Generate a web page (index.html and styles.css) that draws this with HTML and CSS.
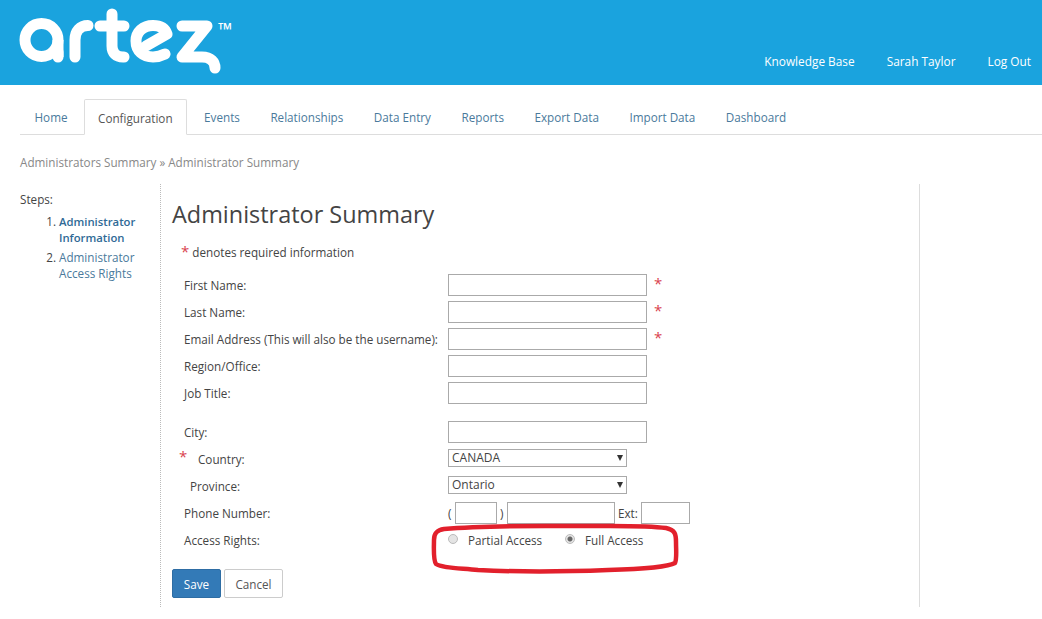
FILE: index.html
```html
<!DOCTYPE html>
<html lang="en">
<head>
<meta charset="utf-8">
<title>Administrator Summary</title>
<link rel="stylesheet" href="styles.css">
</head>
<body>
<header class="header">
  <a class="logo" aria-label="artez">
    <svg width="235" height="85" viewBox="0 0 235 85" fill="none" stroke="#fff" stroke-width="11" stroke-linecap="round" stroke-linejoin="round">
      <circle cx="41.500" cy="40" r="16.500"/>
      <path d="M58 40V57" stroke-linecap="butt"/>
      <path d="M58 52V57"/>
      <path d="M75 57V40C75 31 80 25.500 88 25.500"/>
      <path d="M112 14V46C112 53 116 57 123 57H124M100 26H124"/>
      <path d="M146 46L167 34C165 28 160 25.500 153 25.500C143 25.500 136 32 136 41C136 51 143 57 153 57C158 57 161 56 165 54"/>
      <path d="M182 26H207L182 57H202C211 57 215 62 215 68"/>
      <text class="tm" x="218" y="35.500" stroke="none" fill="#fff">™</text>
    </svg>
  </a>
  <nav class="user-nav">
    <a>Knowledge Base</a>
    <a>Sarah Taylor</a>
    <a>Log Out</a>
  </nav>
</header>

<nav class="tabs">
  <a class="tab">Home</a>
  <a class="tab active">Configuration</a>
  <a class="tab">Events</a>
  <a class="tab">Relationships</a>
  <a class="tab">Data Entry</a>
  <a class="tab">Reports</a>
  <a class="tab">Export Data</a>
  <a class="tab">Import Data</a>
  <a class="tab">Dashboard</a>
</nav>

<div class="breadcrumb">Administrators Summary » Administrator Summary</div>

<div class="page">
  <aside class="steps">
    <div class="steps-title">Steps:</div>
    <ol class="steps-list">
      <li><a class="current">Administrator Information</a></li>
      <li><a>Administrator Access Rights</a></li>
    </ol>
  </aside>

  <main class="content">
    <h1 class="title">Administrator Summary</h1>
    <p class="required-note"><span class="star">*</span> denotes required information</p>

    <form class="form">
      <div class="row"><label class="label">First Name:</label><input class="input" type="text"><span class="star side">*</span></div>
      <div class="row"><label class="label">Last Name:</label><input class="input" type="text"><span class="star side">*</span></div>
      <div class="row"><label class="label">Email Address (This will also be the username):</label><input class="input" type="text"><span class="star side">*</span></div>
      <div class="row"><label class="label">Region/Office:</label><input class="input" type="text"></div>
      <div class="row"><label class="label">Job Title:</label><input class="input" type="text"></div>
      <div class="row city"><label class="label">City:</label><input class="input" type="text"></div>
      <div class="row"><label class="label country"><span class="star lead">*</span>Country:</label><div class="select">CANADA<span class="caret"></span></div></div>
      <div class="row"><label class="label province">Province:</label><div class="select">Ontario<span class="caret"></span></div></div>
      <div class="row"><label class="label">Phone Number:</label>
        <div class="phone">
          <span class="paren">(</span><input class="input area" type="text"><span class="paren">)</span><input class="input number" type="text"><span class="ext-label">Ext:</span><input class="input ext" type="text">
        </div>
      </div>
      <div class="row"><label class="label">Access Rights:</label>
        <div class="radios">
          <span class="radio"></span><span class="radio-label partial">Partial Access</span>
          <span class="radio checked"></span><span class="radio-label">Full Access</span>
        </div>
      </div>
      <div class="actions">
        <button class="btn primary" type="button">Save</button>
        <button class="btn" type="button">Cancel</button>
      </div>
    </form>
  </main>
</div>

<svg class="scribble" width="256" height="56" viewBox="0 0 256 56" fill="none" stroke="#e2202c" stroke-width="4.500" stroke-linecap="round" stroke-linejoin="round">
  <path d="M16 7C60 3 110 4 150 4C185 4 218 3 238 6C247 8 248 12 248 20C248 28 249 37 247 41C240 45 215 47 180 48C130 50 90 50 50 48C30 46 14 46 8 42C5 38 6 25 6 18C6 11 9 8 16 7Z"/>
</svg>
</body>
</html>
```
FILE: styles.css
```css
* {
  box-sizing: border-box;
}

html, body {
  margin: 0;
  padding: 0;
  height: 619px;
  overflow: hidden;
  background: #fff;
}

body {
  position: relative;
  font-family: "Open Sans", sans-serif;
  font-size: 11.7px;
  color: #444;
  line-height: 16px;
}

.header {
  display: flex;
  justify-content: space-between;
  align-items: flex-end;
  height: 85px;
  background: #1aa3de;
}

.logo {
  display: block;
  height: 85px;
}

.tm {
  font-family: "Open Sans", sans-serif;
  font-size: 18px;
  font-weight: 700;
}

.logo svg {
  display: block;
  overflow: visible;
}

.user-nav {
  display: flex;
  gap: 32px;
  padding: 0 11px 16px 0;
  font-size: 11.85px;
  color: #fff;
}

.tabs {
  display: flex;
  margin: 14px 0 0 20px;
  height: 36px;
  border-bottom: 1px solid #ddd;
}

.tab {
  padding: 10px 15.25px 0;
  height: 36px;
  color: #4a7a9c;
}

.tab:first-child {
  padding-left: 14.500px;
}

.active {
  margin: 0 2px 0 1px;
  padding: 10px 13.25px 0;
  background: #fff;
  border: 1px solid #ddd;
  border-bottom-color: #fff;
  border-radius: 2px 2px 0 0;
  color: #555;
}

.breadcrumb {
  margin: 19px 0 0 20px;
  color: #888;
}

.page {
  display: flex;
  margin-top: 14px;
  padding-left: 20px;
}

.steps {
  width: 140px;
  padding-top: 7px;
  color: #444;
}

.steps-list {
  margin: 6px 0 0;
  padding: 0 0 0 39px;
}

.steps-list li {
  margin-bottom: 3px;
}

.steps-list a {
  display: block;
  color: #4a7a9c;
}

.steps-list .current {
  font-size: 11.3px;
  font-weight: 600;
  color: #2f6a96;
}

.content {
  width: 760px;
  height: 423px;
  padding: 0 11px;
  border-left: 1px dotted #bbb;
  border-right: 1px solid #ddd;
}

.title {
  margin: 15px 0 0;
  font-size: 23.450px;
  font-weight: 400;
  line-height: 30px;
  color: #444;
}

.required-note {
  margin: 14px 0 0 9px;
}

.star {
  color: #d9434e;
  font-size: 15px;
}

.form {
  margin-top: 11px;
}

.row {
  display: flex;
  align-items: center;
  height: 27px;
  padding-left: 12px;
}

.city {
  margin-top: 12px;
}

.label {
  flex: none;
  width: 264px;
}

.country {
  position: relative;
  padding-left: 14px;
}

.lead {
  position: absolute;
  left: -5px;
  top: -3px;
}

.province {
  padding-left: 6px;
}

.input {
  display: block;
  width: 199px;
  height: 22px;
  padding: 0;
  background: #fff;
  border: 1px solid #aaa;
  border-radius: 0;
}

.side {
  margin: -3px 0 0 7px;
}

.select {
  position: relative;
  width: 179px;
  height: 18px;
  margin-top: -1px;
  padding-left: 3px;
  border: 1px solid #aaa;
  font-size: 12px;
  line-height: 16px;
  color: #444;
}

.caret {
  position: absolute;
  right: 3px;
  top: 5px;
  width: 0;
  height: 0;
  border-left: 3.500px solid transparent;
  border-right: 3.500px solid transparent;
  border-top: 6px solid #333;
}

.phone {
  display: flex;
  align-items: center;
  gap: 3px;
}

.paren {
  width: 4px;
}

.ext-label {
  width: 20px;
}

.area {
  width: 42px;
}

.number {
  width: 108px;
}

.ext {
  width: 49px;
}

.radios {
  display: flex;
  align-items: center;
}

.radio {
  width: 10px;
  height: 10px;
  margin-top: -1px;
  background: #e4e4e4;
  border: 1px solid #bbb;
  border-radius: 50%;
}

.radio.checked {
  background: radial-gradient(circle, #666 0 2px, #e4e4e4 3px);
}

.radio-label {
  width: 96px;
  margin-left: 10px;
  margin-top: 1px;
}

.radio-label.partial {
  width: 97px;
}

.actions {
  display: flex;
  gap: 3px;
  margin-top: 16px;
}

.btn {
  width: 59px;
  height: 29px;
  padding: 0;
  font: inherit;
  color: #555;
  background: #fff;
  border: 1px solid #ccc;
  border-radius: 2px;
}

.primary {
  width: 49px;
  color: #fff;
  background: #337ab7;
  border-color: #2e6da4;
}

.scribble {
  position: absolute;
  left: 428px;
  top: 522px;
}
```
